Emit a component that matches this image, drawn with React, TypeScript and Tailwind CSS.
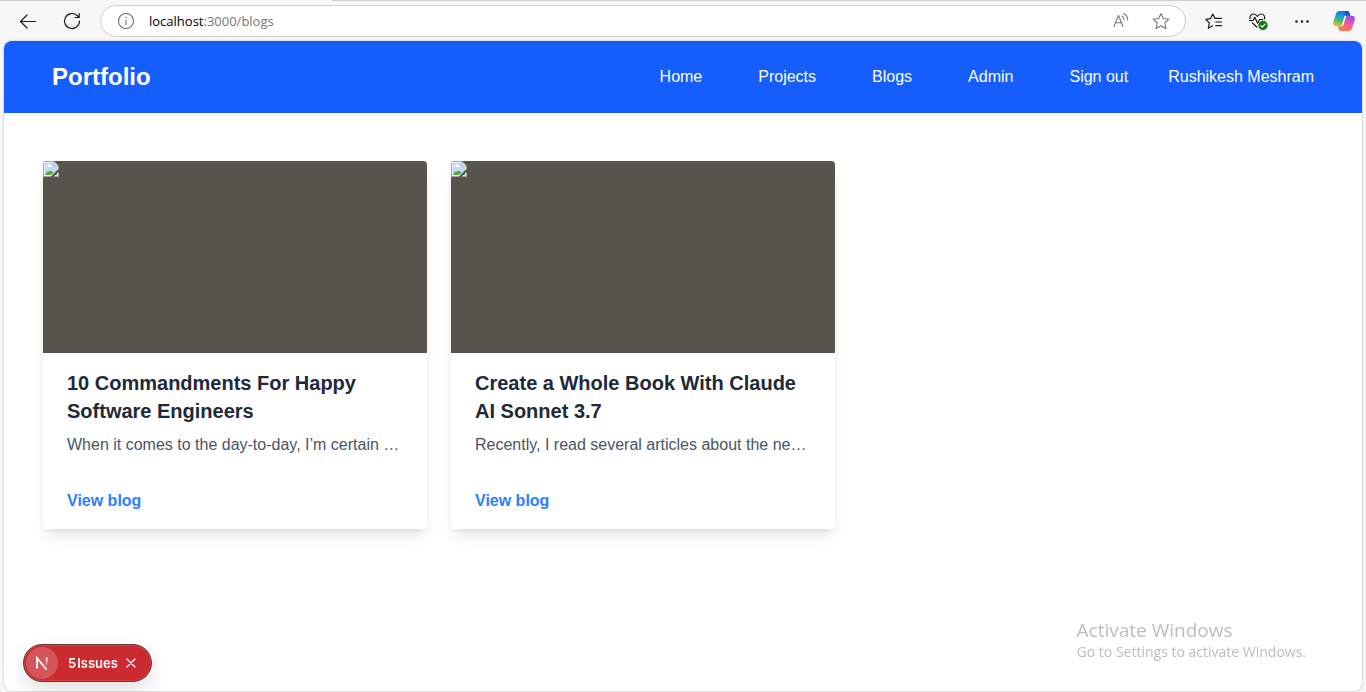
import type { ReactNode } from "react";

const navLinks = ["Home", "Projects", "Blogs", "Admin", "Sign out"];

const blogs = [
  {
    title: "10 Commandments For Happy Software Engineers",
    summary: "When it comes to the day-to-day, I’m certain most engineers",
  },
  {
    title: "Create a Whole Book With Claude AI Sonnet 3.7",
    summary: "Recently, I read several articles about the new Claude model",
  },
];

function ToolButton({ label, children }: { label: string; children: ReactNode }) {
  return (
    <button type="button" aria-label={label} className="flex size-5 shrink-0 items-center justify-center">
      {children}
    </button>
  );
}

function BackIcon() {
  return (
    <svg width="20" height="20" viewBox="0 0 20 20" fill="none" stroke="#1b1b1b" strokeWidth="1.2" strokeLinecap="round" strokeLinejoin="round">
      <path d="M17.5 10.500H2.500M9 4 2.500 10.500 9 17" />
    </svg>
  );
}

function ReloadIcon() {
  return (
    <svg width="20" height="20" viewBox="0 0 20 20" fill="none" stroke="#1b1b1b" strokeWidth="1.2" strokeLinecap="round" strokeLinejoin="round">
      <path d="M17.5 10a7.5 7.5 0 1 1-2.4-5.5L17 6.300M17.200 2.500V6.500H13" />
    </svg>
  );
}

function InfoIcon() {
  return (
    <svg width="18" height="18" viewBox="0 0 18 18" fill="none" stroke="#6e6e6e" strokeWidth="1.1" strokeLinecap="round">
      <circle cx="9" cy="9" r="7.500" />
      <path d="M9 8v4.500" />
      <path d="M9 5.500v.1" strokeWidth="1.500" />
    </svg>
  );
}

function ReadAloudIcon() {
  return (
    <svg width="18" height="18" viewBox="0 0 18 18" fill="none" stroke="#767676" strokeWidth="1.1" strokeLinecap="round" strokeLinejoin="round">
      <path d="M2 14.500 6.500 3.500l4.500 11M3.600 10.700h5.800" />
      <path d="M10 4.200c1.300.8 2 2 2 3.600M11.700 1.600c2.600 1.400 4 3.500 4 6.400" />
    </svg>
  );
}

function StarIcon() {
  return (
    <svg width="20" height="20" viewBox="0 0 20 20" fill="none" stroke="#767676" strokeWidth="1.1" strokeLinejoin="round">
      <path d="m10 2.500 2.350 5.050 5.450.65-4 3.800 1.050 5.450L10 14.800l-4.850 2.650L6.200 12l-4-3.800 5.450-.65z" />
    </svg>
  );
}

function FavoritesIcon() {
  return (
    <svg width="20" height="20" viewBox="0 0 20 20" fill="none" stroke="#1b1b1b" strokeWidth="1.2" strokeLinecap="round" strokeLinejoin="round">
      <path d="M12.500 7.300H10.800L8.800 3 6.500 7.600l-4.700.7 3.500 3.500-.9 5.400 4.200-2.400" />
      <path d="M11.800 7.300H17.500M11.800 11h5.700M11.800 14.700h5.700" />
    </svg>
  );
}

function HealthIcon() {
  return (
    <svg width="20" height="20" viewBox="0 0 20 20" fill="none" strokeLinecap="round" strokeLinejoin="round">
      <g stroke="#1b1b1b" strokeWidth="1.2">
        <path d="M2 7.700C1.600 4.800 3.200 3 5.400 3c1.700 0 2.900.9 3.900 2.300C10.300 3.900 11.600 3 13.200 3c2.300 0 3.900 1.900 3.400 4.800" />
        <path d="M1.500 9.500H5l1.800-3.200 2.800 6 2-3.800h3.200M4.500 12l4.200 4" />
      </g>
      <circle cx="15" cy="14.500" r="4.700" fill="#107c10" />
      <path d="m12.900 14.700 1.400 1.300 2.700-2.800" stroke="#fff" strokeWidth="1.200" />
    </svg>
  );
}

function MoreIcon() {
  return (
    <svg width="20" height="20" viewBox="0 0 20 20" fill="#1b1b1b">
      <circle cx="4.500" cy="10.500" r="1.300" />
      <circle cx="10" cy="10.500" r="1.300" />
      <circle cx="15.500" cy="10.500" r="1.300" />
    </svg>
  );
}

function CopilotIcon() {
  return (
    <svg width="22" height="20" viewBox="0 0 22 20" className="shrink-0">
      <defs>
        <linearGradient id="cool" x1="0.600" y1="0" x2="0.300" y2="1">
          <stop offset="0" stopColor="#1b6fe0" />
          <stop offset=".4" stopColor="#16a5d8" />
          <stop offset=".7" stopColor="#62bd55" />
          <stop offset="1" stopColor="#f2c811" />
        </linearGradient>
        <linearGradient id="warm" x1="0.700" y1="0" x2="0.300" y2="1">
          <stop offset="0" stopColor="#a04ee8" />
          <stop offset=".5" stopColor="#ee5b9d" />
          <stop offset="1" stopColor="#ff7a3d" />
        </linearGradient>
      </defs>
      <path fill="url(#cool)" d="M6.500 0H14c1.300 0 2 .8 2.400 2l.8 2.800h-2.400c-1.400 0-2.200.7-2.600 2l-1.900 6.300c-.5 1.500-1.200 2.200-2.700 2.200H3.300C.7 15.300-.4 13.300.3 10.800L2.900 3C3.500 1 4.700 0 6.500 0z" />
      <path fill="url(#warm)" d="M15.500 20H8c-1.300 0-2-.8-2.400-2l-.8-2.700h2.500c1.400 0 2.200-.7 2.600-2l1.900-6.400c.5-1.500 1.200-2.100 2.700-2.100h4.200c2.600 0 3.700 1.900 3 4.400L19.100 17c-.6 2-1.800 3-3.600 3z" />
      <path fill="#1750c4" d="M12 0h2c1.300 0 2 .8 2.400 2l.8 2.800h-2.400c-1 0-1.700.4-2.100 1.100z" />
      <path fill="#f7f7f7" d="M11.300 5.500c.4-.5.900-.7 1.700-.7h1.600c-1 .2-1.600.8-1.900 1.800l-2 6.600c-.4 1.400-1 2-2.100 2.100H7.200c1-.2 1.500-.8 1.800-1.800z" />
    </svg>
  );
}

function BrokenImageIcon() {
  return (
    <svg width="16" height="16" viewBox="0 0 16 16">
      <path d="M0 0h11l5 5v11H0z" fill="#a3a3a3" />
      <path d="M1 1h10l4 4v10H1z" fill="#eef3fb" />
      <path d="M2 2h8.500v4H14v8H2z" fill="#c3d5f6" />
      <path d="M3 6c0-1.300 1-1.600 1.600-1.400C5 3 7.500 3 7.900 4.600 9 4.600 9.300 6 8.500 6z" fill="#fff" />
      <path d="M2 14c1.200-3 3-4 5-4 1.600 0 2.700.5 3.500 1.400L8 14zM11.500 14l2.500-2.500V14z" fill="#55ad35" />
      <path d="M11 .5V5h4.500z" fill="#fff" stroke="#8a8a8a" strokeWidth=".8" />
      <path d="M7.500 16 16 7.500v3L10.500 16z" fill="#57534d" />
    </svg>
  );
}

function BrowserBar() {
  return (
    <header className="bg-[#f7f7f7] font-['Open_Sans',sans-serif]">
      <div className="flex h-px">
        <span className="w-20 bg-[#cccccc]" />
        <span className="w-[252px]" />
        <span className="flex-1 bg-[#cccccc]" />
      </div>
      <div className="flex h-10 items-center pr-3 pl-[18px]">
        <div className="flex gap-6">
          <ToolButton label="Back"><BackIcon /></ToolButton>
          <ToolButton label="Refresh"><ReloadIcon /></ToolButton>
        </div>
        <div className="ml-[18px] flex h-8 flex-1 items-center rounded-full border border-[#d0d0d0] bg-white pr-[14px] pl-[15px]">
          <ToolButton label="View site information"><InfoIcon /></ToolButton>
          <p className="ml-[13px] flex-1 text-[13px] leading-5 text-[#767676]">
            <span className="text-black">localhost</span>:3000/blogs
          </p>
          <div className="flex gap-5">
            <ToolButton label="Read aloud"><ReadAloudIcon /></ToolButton>
            <ToolButton label="Add to favorites"><StarIcon /></ToolButton>
          </div>
        </div>
        <div className="mr-[22px] ml-[18px] flex items-center gap-6">
          <ToolButton label="Favorites"><FavoritesIcon /></ToolButton>
          <ToolButton label="Browser essentials"><HealthIcon /></ToolButton>
          <ToolButton label="Settings and more"><MoreIcon /></ToolButton>
        </div>
        <ToolButton label="Copilot"><CopilotIcon /></ToolButton>
      </div>
    </header>
  );
}

function BlogCard({ title, summary }: { title: string; summary: string }) {
  return (
    <article className="w-96 overflow-hidden rounded bg-white shadow-lg">
      <div className="h-48 bg-[#57534d]">
        <BrokenImageIcon />
      </div>
      <div className="px-6 py-4">
        <h2 className="mb-2 text-xl leading-7 font-bold text-[#1e2939]">{title}</h2>
        <p className="truncate text-base text-[#4a5565]">{summary}</p>
        <a href="#blog" className="mt-8 block text-base font-bold text-[#2b7fff]">View blog</a>
      </div>
    </article>
  );
}

function IssuesBadge() {
  return (
    <div className="fixed bottom-[10px] left-[23px] flex h-[38px] items-center rounded-full border border-[#5c4040] bg-[#ca2a30] pr-[14px] pl-[2px] text-white shadow-[0_8px_20px_rgba(0,0,0,0.12)] ring-1 ring-[#e5484d]/60 ring-inset">
      <button type="button" aria-label="Open dev tools" className="flex size-8 items-center justify-center rounded-full bg-[#d4555a]">
        <svg width="14" height="14" viewBox="0 0 14 14" fill="none" strokeWidth="1.800">
          <defs>
            <linearGradient id="nstem" x1="0" y1="0" x2="0" y2="1">
              <stop offset="0" stopColor="#fff" />
              <stop offset="1" stopColor="#fff" stopOpacity=".1" />
            </linearGradient>
          </defs>
          <path d="M2 12.500V2l9.500 11.500" stroke="#fff" />
          <path d="M10.800 1.500h1.700v8.500h-1.700z" fill="url(#nstem)" />
        </svg>
      </button>
      <button type="button" className="ml-[10px] flex gap-px font-[Inter,sans-serif] text-[13px] leading-5 font-semibold">
        <span>5</span>
        <span>Issues</span>
      </button>
      <button type="button" aria-label="Hide issues" className="ml-[7px] flex size-3 items-center justify-center">
        <svg width="10" height="10" viewBox="0 0 10 10" stroke="#fff" strokeWidth="1.200" strokeLinecap="round">
          <path d="m1 1 8 8M9 1 1 9" />
        </svg>
      </button>
    </div>
  );
}

export default function App() {
  return (
    <div className="flex min-h-screen flex-col bg-[#f7f7f7] font-['Liberation_Sans',Arial,sans-serif]">
      <BrowserBar />
      <div className="mx-1 mb-px flex flex-1 flex-col overflow-hidden rounded-lg bg-white shadow-[0_0_2px_rgba(0,0,0,0.35)]">
        <nav className="flex h-[72px] items-center justify-between bg-[#155dfc] px-12 text-white">
          <a href="#top" className="text-2xl font-bold">Portfolio</a>
          <div className="flex items-center gap-10">
            <ul className="flex gap-14">
              {navLinks.map((link) => (
                <li key={link}>
                  <a href="#nav">{link}</a>
                </li>
              ))}
            </ul>
            <span>Rushikesh Meshram</span>
          </div>
        </nav>
        <main className="mx-auto flex w-full max-w-7xl flex-wrap gap-6 py-12">
          {blogs.map((blog) => (
            <BlogCard key={blog.title} {...blog} />
          ))}
        </main>
      </div>
      <IssuesBadge />
      <aside className="pointer-events-none fixed right-[60px] bottom-[30px] font-['Open_Sans',sans-serif] text-[#bdbdbd]">
        <p className="text-[19px] leading-6">Activate Windows</p>
        <p className="text-sm leading-5">Go to Settings to activate Windows.</p>
      </aside>
    </div>
  );
}
